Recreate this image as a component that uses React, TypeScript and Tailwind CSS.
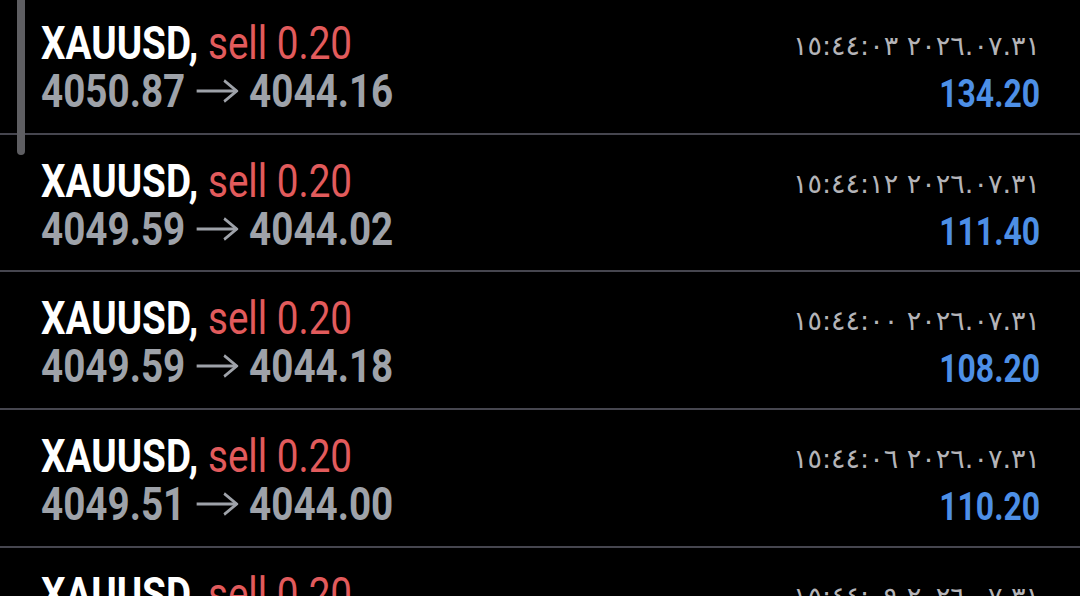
import React from "react";

type Deal = {
    from: string;
    to: string;
    time: string;
    profit: string;
};

const deals: Deal[] = [
    { from: "4050.87", to: "4044.16", time: "٢٠٢٦.٠٧.٣١ ١٥:٤٤:٠٣", profit: "134.20" },
    { from: "4049.59", to: "4044.02", time: "٢٠٢٦.٠٧.٣١ ١٥:٤٤:١٢", profit: "111.40" },
    { from: "4049.59", to: "4044.18", time: "٢٠٢٦.٠٧.٣١ ١٥:٤٤:٠٠", profit: "108.20" },
    { from: "4049.51", to: "4044.00", time: "٢٠٢٦.٠٧.٣١ ١٥:٤٤:٠٦", profit: "110.20" },
    { from: "4049.51", to: "4044.06", time: "٢٠٢٦.٠٧.٣١ ١٥:٤٤:٠٩", profit: "109.00" },
];

function Arrow() {
    return (
        <svg
            width="50"
            height="24"
            viewBox="0 0 50 24"
            className="mx-[13px] shrink-0"
            fill="none"
            stroke="#9ea2a9"
            strokeWidth="3"
        >
            <path d="M0 12 H48" />
            <path d="M33 1.5 L48 12 L33 22.5" strokeLinejoin="miter" />
        </svg>
    );
}

function DealRow({ deal }: { deal: Deal }) {
    return (
        <div className="flex h-[137.67px] shrink-0 justify-between border-b-2 border-[#46464f] pl-[41px] pr-[40px] pt-[22px]">
            <div className="flex flex-col font-['Roboto',sans-serif]">
                <div className="h-[48px] origin-left scale-x-[0.84] whitespace-nowrap text-[46px] leading-[48px]">
                    <span className="font-bold text-white">XAUUSD,</span>{" "}
                    <span className="text-[#e25b5c]">sell 0.20</span>
                </div>
                <div className="flex h-[48px] origin-left scale-x-[0.84] items-center whitespace-nowrap text-[46px] font-bold leading-[48px] text-[#9ea2a9]">
                    <span>{deal.from}</span>
                    <Arrow />
                    <span>{deal.to}</span>
                </div>
            </div>
            <div className="flex flex-col items-end">
                <div className="h-[48px] whitespace-nowrap pt-[3px] font-['DejaVu_Sans',sans-serif] text-[27px] leading-[48px] text-[#b4b4b8]">
                    {deal.time}
                </div>
                <div className="h-[48px] origin-right scale-x-[0.84] whitespace-nowrap pt-[3px] font-['Roboto',sans-serif] text-[38px] font-bold leading-[48px] text-[#4d8fe6]">
                    {deal.profit}
                </div>
            </div>
        </div>
    );
}

export default function App() {
    return (
        <div className="relative h-[596px] w-[1080px] overflow-hidden bg-black">
            <div className="-mt-[3px] flex flex-col">
                {deals.map((deal, i) => (
                    <DealRow key={i} deal={deal} />
                ))}
            </div>
            <div className="absolute left-[17px] top-0 h-[155px] w-[8px] rounded-b-full bg-[#5e5e62]" />
        </div>
    );
}
